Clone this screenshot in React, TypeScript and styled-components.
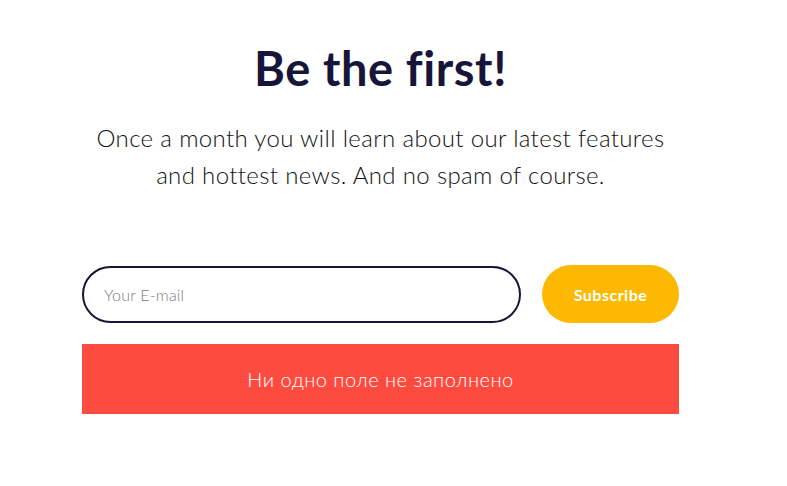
import React from 'react';
import styled, { createGlobalStyle } from 'styled-components';

const GlobalStyle = createGlobalStyle`
  body {
    margin: 0;
    background: #fff;
    font-family: Lato, "Noto Sans", sans-serif;
  }
`;

const Section = styled.section`
  width: 597px;
  margin-left: 82px;
  padding-top: 38px;
  display: flex;
  flex-direction: column;
  align-items: center;
`;

const Title = styled.h1`
  margin: 0;
  font-size: 47px;
  line-height: 60px;
  font-weight: 700;
  color: #17163a;
  letter-spacing: 0.6px;
`;

const Lead = styled.p`
  margin: 21px 0 0;
  font-size: 24px;
  line-height: 37px;
  font-weight: 300;
  color: #111;
  letter-spacing: 0.35px;
  text-align: center;
  white-space: nowrap;
`;

const Form = styled.form`
  align-self: stretch;
  margin-top: 72px;
  display: flex;
  align-items: center;
  gap: 21px;
`;

const EmailInput = styled.input`
  flex: 1;
  height: 57px;
  box-sizing: border-box;
  border: 2px solid #17163a;
  border-radius: 29px;
  padding: 0 20px;
  font-family: inherit;
  font-size: 16px;
  color: #333;
  outline: none;

  &::placeholder {
    color: #7d7d7d;
    font-weight: 300;
    letter-spacing: 0.2px;
  }
`;

const SubscribeButton = styled.button`
  width: 137px;
  height: 58px;
  border: none;
  border-radius: 29px;
  background: #fdb801;
  color: #fff;
  font-family: inherit;
  font-size: 16px;
  font-weight: 700;
  letter-spacing: 0.5px;
  cursor: pointer;
`;

const ErrorBar = styled.div`
  align-self: stretch;
  margin-top: 21px;
  height: 70px;
  background: #fd4c3f;
  color: #fff;
  display: flex;
  align-items: center;
  justify-content: center;
  font-size: 20px;
  font-weight: 300;
  letter-spacing: 0.5px;
`;

export default function App(): JSX.Element {
  return (
    <>
      <GlobalStyle />
      <Section>
        <Title>Be the first!</Title>
        <Lead>
          Once a month you will learn about our latest features
          <br />
          and hottest news. And no spam of course.
        </Lead>
        <Form onSubmit={(e) => e.preventDefault()}>
          <EmailInput type="email" placeholder="Your E-mail" />
          <SubscribeButton type="submit">Subscribe</SubscribeButton>
        </Form>
        <ErrorBar>Ни одно поле не заполнено</ErrorBar>
      </Section>
    </>
  );
}
